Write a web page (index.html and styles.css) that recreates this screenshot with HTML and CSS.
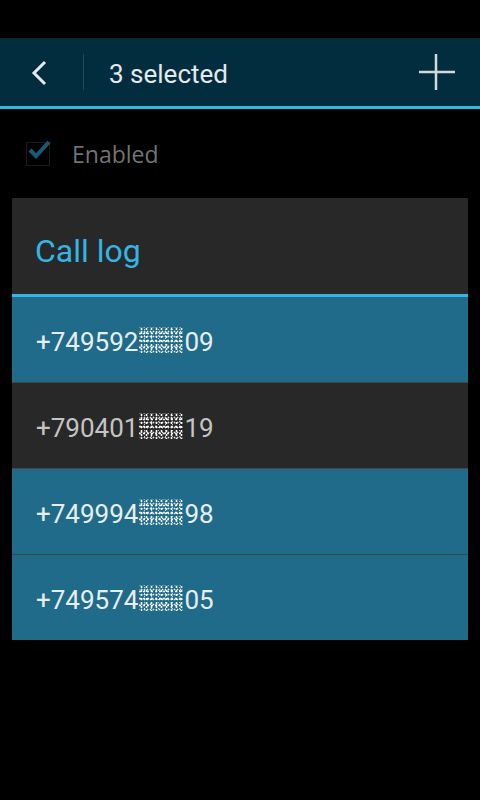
FILE: index.html
```html
<!DOCTYPE html>
<html lang="en">
<head>
    <meta charset="UTF-8">
    <meta name="viewport" content="width=device-width, initial-scale=1.0">
    <title>Call log</title>
    <link rel="stylesheet" href="styles.css">
</head>
<body>
    <div class="status-bar"></div>

    <header class="action-bar">
        <button class="back" type="button" aria-label="Back">
            <svg width="20" height="26" viewBox="0 0 20 26">
                <polyline points="15,2 4,13 15,24" fill="none" stroke="#e4eaec" stroke-width="3"/>
            </svg>
        </button>
        <span class="bar-divider"></span>
        <h1 class="bar-title">3 selected</h1>
        <button class="add" type="button" aria-label="Add">
            <svg width="38" height="38" viewBox="0 0 38 38">
                <line x1="1" y1="18" x2="37" y2="18" stroke="#d2dadd" stroke-width="2.5"/>
                <line x1="18" y1="0" x2="18" y2="36" stroke="#d2dadd" stroke-width="2.5"/>
            </svg>
        </button>
    </header>

    <label class="enabled">
        <span class="check">
            <svg width="26" height="22" viewBox="0 0 26 22">
                <polyline points="3,11 9,17 22,3" fill="none" stroke="#185a75" stroke-width="4"/>
            </svg>
        </span>
        <span class="enabled-text">Enabled</span>
    </label>

    <div class="dialog">
        <h2 class="dialog-title">Call log</h2>
        <ul class="numbers">
            <li class="number selected">+749592<span class="mask"></span>09</li>
            <li class="number">+790401<span class="mask"></span>19</li>
            <li class="number selected">+749994<span class="mask"></span>98</li>
            <li class="number selected">+749574<span class="mask"></span>05</li>
        </ul>
    </div>
</body>
</html>
```

FILE: styles.css
```css
body {
    margin: 0;
    background-color: #000;
    font-family: Roboto, "Liberation Sans", sans-serif;
}

.status-bar {
    height: 38px;
}

.action-bar {
    height: 68px;
    background-color: #022d3f;
    border-bottom: 3px solid #33b5e5;
    display: flex;
    align-items: center;
}

.action-bar button {
    background: none;
    border: none;
    padding: 0;
    display: flex;
}

.back {
    margin-left: 30px;
    margin-top: 2px;
}

.bar-divider {
    width: 1px;
    height: 36px;
    background-color: #1f4757;
    margin-left: 33px;
}

.bar-title {
    margin: 4px 0 0 25px;
    flex: 1;
    font-size: 26px;
    font-weight: normal;
    color: #e4eaec;
}

.add {
    margin-right: 24px;
    margin-top: 1px;
}

.enabled {
    display: flex;
    align-items: center;
    height: 89px;
    padding-left: 26px;
}

.check {
    width: 22px;
    height: 22px;
    border: 1px solid #1a1a1a;
    position: relative;
}

.check svg {
    position: absolute;
    left: 0;
    top: -4px;
}

.enabled-text {
    margin-left: 22px;
    margin-top: 1px;
    font-family: "Open Sans", "DejaVu Sans", sans-serif;
    font-size: 23px;
    color: #737373;
}

.dialog {
    margin: 0 12px;
    background-color: #282828;
}

.dialog-title {
    margin: 0;
    height: 99px;
    padding: 33px 0 0 23px;
    box-sizing: border-box;
    font-size: 32px;
    line-height: 40px;
    font-weight: normal;
    color: #33b5e5;
    border-bottom: 3px solid #33b5e5;
}

.numbers {
    list-style: none;
    margin: 0;
    padding: 0;
}

.number {
    height: 85px;
    box-sizing: border-box;
    padding: 4px 0 0 24px;
    display: flex;
    align-items: center;
    font-size: 26px;
    color: #c4c4c4;
}

.number + .number {
    height: 86px;
    border-top: 1px solid #444;
}

.number.selected {
    background-color: #206b8a;
    color: #e8eef0;
}

.mask {
    display: inline-block;
    width: 44px;
    height: 26px;
    margin: -3px 1px 0 1px;
    background-image:
        radial-gradient(circle, #fff 0.9px, transparent 1.2px),
        radial-gradient(circle, rgba(255, 255, 255, 0.85) 0.8px, transparent 1.1px),
        radial-gradient(circle, rgba(255, 255, 255, 0.7) 0.7px, transparent 1px),
        radial-gradient(circle, rgba(255, 255, 255, 0.9) 0.9px, transparent 1.2px);
    background-size: 5px 4px, 3px 5px, 7px 3px, 4px 7px;
    background-position: 0 0, 1px 2px, 2px 1px, 3px 3px;
}
```
